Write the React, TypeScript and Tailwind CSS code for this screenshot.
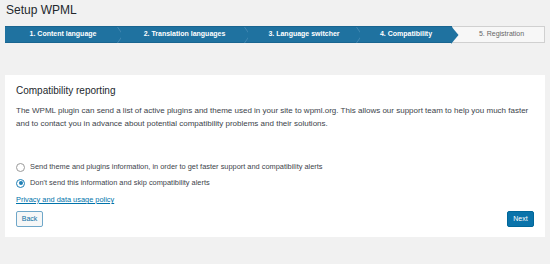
import React from "react";

const steps = [
  { label: "1. Content language", w: "w-[116px]", state: "done" },
  { label: "2. Translation languages", w: "w-[127px]", state: "done" },
  { label: "3. Language switcher", w: "w-[112px]", state: "done" },
  { label: "4. Compatibility", w: "w-[92px]", state: "current" },
  { label: "5. Registration", w: "flex-1", state: "todo" },
];

function Chevron() {
  return (
    <svg className="absolute right-[-3px] top-0 h-[16px] w-[7px]" viewBox="0 0 7 16">
      <polyline points="0.5,0 6,8 0.5,16" fill="none" stroke="#4a8db5" strokeWidth="0.8" />
    </svg>
  );
}

function ArrowTip() {
  return (
    <svg className="absolute right-[-7px] top-[-1px] z-10 h-[18px] w-[8px]" viewBox="0 0 8 18">
      <polygon points="0,0 7.5,9 0,18" fill="#1f72a0" />
    </svg>
  );
}

function StepBar() {
  return (
    <div className="mx-[5px] mt-[9px] flex h-[17px] border-y border-[#1a6590]">
      {steps.map((s, i) => (
        <div
          key={s.label}
          className={
            "relative flex items-center justify-center text-[7px] " +
            s.w +
            (s.state === "todo"
              ? " -my-px border border-[#d0d0d0] bg-[#f7f7f7] pl-[6px] text-[#666]"
              : " bg-[#1f72a0] font-bold text-white")
          }
        >
          {s.label}
          {s.state === "done" && i < 3 && <Chevron />}
          {s.state === "current" && <ArrowTip />}
        </div>
      ))}
    </div>
  );
}

function Radio({ checked, label }: { checked?: boolean; label: string }) {
  return (
    <label className="flex items-center gap-[5px] text-[7.4px] leading-[16px] text-[#3c434a]">
      <span
        className={
          "flex h-[9px] w-[9px] items-center justify-center rounded-full border bg-white " +
          (checked ? "border-[#1e7fb5]" : "border-[#9a9a9a]")
        }
      >
        {checked && <span className="h-[4px] w-[4px] rounded-full bg-[#1e7fb5]" />}
      </span>
      {label}
    </label>
  );
}

export default function App() {
  return (
    <div className="h-[264px] w-[550px] bg-[#f1f1f1] font-['Liberation_Sans',Arial,sans-serif]">
      <h1 className="pl-[6px] pt-[3px] text-[12px] leading-[14px] text-[#23282d]">Setup WPML</h1>
      <StepBar />
      <div className="mx-[5px] mt-[32px] h-[162px] bg-white px-[11px] pt-[10px]">
        <h2 className="text-[10px] leading-[12px] text-[#23282d]">Compatibility reporting</h2>
        <p className="mt-[7px] text-[8px] leading-[13px] text-[#3c434a]">
          The WPML plugin can send a list of active plugins and theme used in your site to wpml.org. This allows our
          support team to help you much faster and to contact you in advance about potential compatibility problems and
          their solutions.
        </p>
        <div className="mt-[29px] flex flex-col">
          <Radio label="Send theme and plugins information, in order to get faster support and compatibility alerts" />
          <Radio checked label="Don't send this information and skip compatibility alerts" />
        </div>
        <a className="mt-[3px] block text-[7.4px] leading-[12px] text-[#0073aa] underline">Privacy and data usage policy</a>
        <div className="mt-[5px] flex justify-between">
          <button className="h-[16px] w-[27px] rounded-[2px] border border-[#6fa7c9] bg-[#f6f7f7] text-[7px] text-[#0a6ea3]">
            Back
          </button>
          <button className="h-[16px] w-[27px] rounded-[2px] border border-[#006799] bg-[#0a73aa] text-[7px] text-white">
            Next
          </button>
        </div>
      </div>
    </div>
  );
}
